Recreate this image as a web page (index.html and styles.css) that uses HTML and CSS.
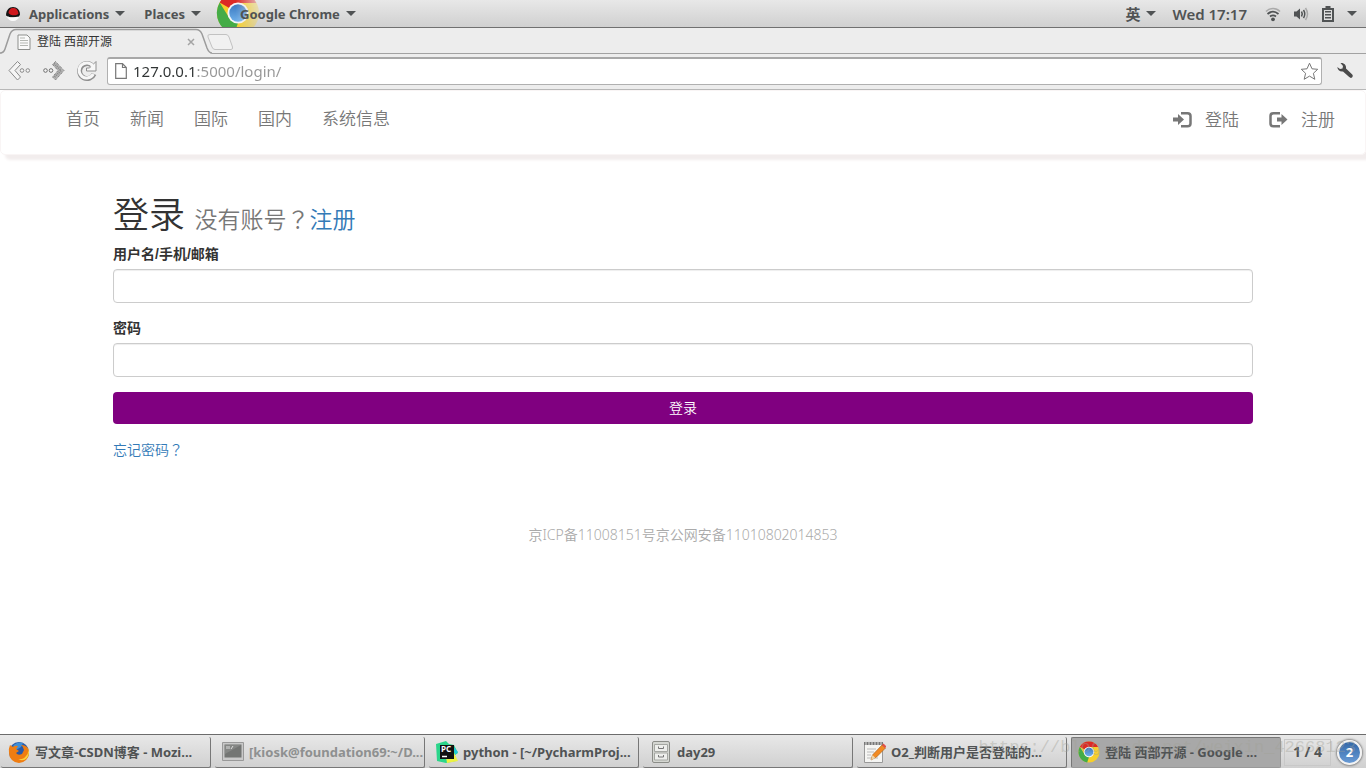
FILE: index.html
```html
<!DOCTYPE html>
<html lang="zh-CN">
<head>
<meta charset="utf-8">
<title>登陆 西部开源</title>
<link rel="stylesheet" href="styles.css">
</head>
<body>
<svg width="0" height="0" class="defs" aria-hidden="true">
  <defs>
    <linearGradient id="blue" x1="0" y1="0" x2="0" y2="1"><stop offset="0" stop-color="#3a78c0"/><stop offset="1" stop-color="#6fb0ea"/></linearGradient>
    <linearGradient id="fade" x1="0" x2="1" y1="0" y2="0"><stop offset=".45" stop-color="#fff"/><stop offset="1" stop-color="#333"/></linearGradient>
    <mask id="fadeMask"><rect width="48" height="48" fill="url(#fade)"/></mask>
    <symbol id="chrome" viewBox="0 0 48 48">
      <circle cx="24" cy="24" r="23" fill="#f6cf2b"/>
      <path d="M24 24 4 12.5A23 23 0 0 1 44 13H24z" fill="#dc2a25"/>
      <path d="M4 12.5 14.5 29.5 24 35 20 46.7A23 23 0 0 1 4 12.5z" fill="#44ac47"/>
      <circle cx="24" cy="24" r="11.5" fill="#f4f6f8"/>
      <circle cx="24" cy="24" r="9.5" fill="url(#blue)"/>
    </symbol>
  </defs>
</svg>

<header class="panel">
  <div class="panel-group">
    <button class="panel-btn apps" type="button">
      <svg width="16" height="16" viewBox="0 0 16 16" aria-hidden="true"><circle cx="8" cy="8" r="7" fill="#f2f2f2"/><path d="M1 9.500C1 4 4 1 8 1s7 3 7 7.500l-1 2C9 11.500 4 12 1 9.500z" fill="#151515"/><path d="M3.500 7c0-3 2-5 4.500-5 2.500-.3 5 1.500 5.500 5.500-1 2.500-8 2.500-10-.5z" fill="#d0181d"/><path d="M3 10.500c3 1.500 7 1.500 10 .5-1 3-3 4-5 4s-5-1.500-5-4.500z" fill="#fafafa"/></svg>
      <span>Applications</span><i class="caret"></i>
    </button>
    <button class="panel-btn" type="button"><span>Places</span><i class="caret"></i></button>
    <button class="panel-btn current" type="button">
      <svg class="current-icon" width="44" height="44" viewBox="0 0 48 48" aria-hidden="true"><use href="#chrome" width="48" height="48" mask="url(#fadeMask)"/></svg>
      <span>Google Chrome</span><i class="caret"></i>
    </button>
  </div>
  <div class="panel-group status">
    <button class="panel-btn lang" type="button"><span>英</span><i class="caret"></i></button>
    <button class="panel-btn clock" type="button"><span>Wed 17:17</span></button>
    <button class="panel-btn" type="button" aria-label="Network"><svg width="16" height="16" viewBox="0 0 16 16" fill="none"><path d="M1 5.500C5 1.500 11 1.500 15 5.500" stroke="#aaa" stroke-width="1.600"/><path d="M2.500 8C6 5 10 5 13.500 8M5 10.500c2-1.500 4-1.500 6 0" stroke="#505354" stroke-width="1.800"/><circle cx="8" cy="13.300" r="1.900" fill="#505354"/></svg></button>
    <button class="panel-btn" type="button" aria-label="Volume"><svg width="16" height="16" viewBox="0 0 16 16" fill="none"><path d="M1 5.500h2.500L7 2.500v11l-3.500-3H1z" fill="#505354"/><path d="M8.500 5.500q1.500 2.500 0 5M10.500 4q2.500 4 0 8" stroke="#505354" stroke-width="1.500"/><path d="M12.500 2q4 6 0 12" stroke="#aaa" stroke-width="1.500"/></svg></button>
    <button class="panel-btn power" type="button" aria-label="Battery"><svg width="14" height="16" viewBox="0 0 14 16"><path d="M4.500 0h5v2H13v14H1V2h3.500z" fill="#505354"/><path d="M3 4h8v10H3z" fill="#ddd"/><path d="M4 5h6v1.500H4zM4 8h6v1.500H4zM4 11h6v1.500H4z" fill="#505354"/></svg><i class="caret"></i></button>
  </div>
</header>

<div class="tabs">
  <div class="tab">
    <svg class="tab-shape" width="212" height="26" viewBox="0 0 212 26" aria-hidden="true"><path d="M0 25.500C3 25.500 4 24 5 21L10 6Q12 1.500 16 1.500H196Q200 1.500 202 6L207 20Q209 25.500 212 25.500V26H0z" fill="#ededed"/><path d="M0 25C3 25 4 24 5 21L10 6Q12 1.500 16 1.500H196Q200 1.500 202 6L207 20Q209 25 212 25" fill="none" stroke="#9c9c9c" stroke-width="1.500"/></svg>
    <svg width="14" height="16" viewBox="0 0 14 16" aria-hidden="true"><path d="M1 1h9l3 3v11.500H1z" fill="#fafafa" stroke="#8d8f8c"/><path d="M3 4h5M3 6.500h8M3 9h8M3 11.500h8" stroke="#b5b8b3"/></svg>
    <span class="tab-title">登陆 西部开源</span>
    <button class="tab-close" type="button" aria-label="Close"><svg width="8" height="8" viewBox="0 0 8 8"><path d="M1 1l6 6M7 1 1 7" stroke="#a4a4a4" stroke-width="1.500"/></svg></button>
  </div>
  <button class="new-tab" type="button" aria-label="New tab"><svg width="28" height="18" viewBox="0 0 28 18"><path d="M4 1.500H20Q22 1.500 23 4L26.500 14Q27 16.500 25 16.500H9Q7 16.500 6 14L2 4Q1 1.500 4 1.500z" fill="#f1f1f1" stroke="#c2c2c2"/></svg></button>
</div>

<div class="toolbar">
  <button class="tool" type="button" aria-label="Back"><svg width="24" height="22" viewBox="0 0 24 22" fill="#f5f5f5" stroke="#8a8a8a"><path d="M9.500 1.500 1 10.500l8.500 9.500 3-3L7 10.500l5.500-6z"/><circle cx="14" cy="10.500" r="1.800"/><circle cx="19.800" cy="10.500" r="1.800"/></svg></button>
  <button class="tool" type="button" aria-label="Forward"><svg width="24" height="22" viewBox="0 0 24 22" fill="#b4b4b4" stroke="#6d6d6d"><path d="M13.500 1.500l8.500 9-8.500 9.500-3-3 5.500-6.500-5.500-6z" stroke-dasharray="1 1"/><path d="M12 3.500l7 7-7 7" fill="none" stroke="#8a8a8a" stroke-width="2" stroke-dasharray="1 1"/><circle cx="3.500" cy="10.500" r="1.800" fill="#f5f5f5"/><circle cx="9" cy="10.500" r="1.800" fill="#f5f5f5"/></svg></button>
  <button class="tool" type="button" aria-label="Reload"><svg width="22" height="22" viewBox="0 0 22 22"><path d="M18 14A7.500 7.500 0 1 1 15.500 5" fill="none" stroke="#8f8f8f" stroke-width="5"/><path d="M20 1.500v9.500h-9.500V8h3z" fill="#f7f7f7" stroke="#8f8f8f"/><path d="M17.300 14A7.500 7.500 0 1 1 17 6.500" fill="none" stroke="#f7f7f7" stroke-width="3"/></svg></button>
  <div class="omnibox">
    <svg width="12" height="16" viewBox="0 0 12 16" aria-hidden="true"><path d="M.7.700H7.500L11.300 4.500V15.300H.7zM7.500.700V4.500H11.300" fill="#fff" stroke="#777" stroke-width="1.200"/></svg>
    <input class="url" type="text" aria-label="Address" value="127.0.0.1:5000/login/">
    <button class="star" type="button" aria-label="Bookmark"><svg width="19" height="19" viewBox="0 0 19 19"><path d="M9.500 1.200 12 6.800l5.700.5-4.300 4 1.400 6-5.300-3.200-5.300 3.200 1.400-6-4.300-4L7 6.800z" fill="#fff" stroke="#777" stroke-linejoin="round"/></svg></button>
  </div>
  <button class="wrench" type="button" aria-label="Menu"><svg width="18" height="18" viewBox="0 0 18 18"><path d="M4.500 1C8 .5 10.500 3 10 6.500L16 12.300c1 1 1 2.200.2 3s-2 .8-3-.2L7 9.500C4 10 1.500 8 1.300 5L4 7l2.500-.5L7 4z" fill="#4b4b4b"/></svg></button>
</div>

<main class="page">
  <nav class="navbar">
    <div class="nav-list">
      <a href="#">首页</a><a href="#">新闻</a><a href="#">国际</a><a href="#">国内</a><a href="#">系统信息</a>
    </div>
    <div class="nav-list account">
      <a href="#"><svg width="19" height="18" viewBox="0 0 19 18" aria-hidden="true"><path d="M0 6.500h5V3l6 5.500L5 14v-3.500H0z" fill="#777"/><path d="M8 2.200h6.500Q17.500 2.200 17.500 5v7.500q0 2.800-3 2.800H8" fill="none" stroke="#777" stroke-width="2.500"/></svg>登陆</a>
      <a href="#"><svg width="19" height="18" viewBox="0 0 19 18" aria-hidden="true"><path d="M11 2.200H4.500Q1.500 2.200 1.500 5v7.500q0 2.800 3 2.800H11" fill="none" stroke="#777" stroke-width="2.500"/><path d="M8 6.500h4.500V3L18.500 8.500l-6 5.500v-3.500H8z" fill="#777"/></svg>注册</a>
    </div>
  </nav>
  <form class="login">
    <h1>登录 <small>没有账号<span class="mark" lang="zh-TW">？</span><a href="#">注册</a></small></h1>
    <div class="field"><label for="user">用户名/手机/邮箱</label><input id="user" type="text"></div>
    <div class="field"><label for="pass">密码</label><input id="pass" type="password"></div>
    <button class="submit" type="button">登录</button>
    <a class="forgot" href="#">忘记密码<span class="mark" lang="zh-TW">？</span></a>
  </form>
  <footer class="footer">京ICP备11008151号京公网安备11010802014853</footer>
</main>

<div class="taskbar">
  <div class="tasks">
    <button class="task" type="button"><svg width="22" height="22" viewBox="0 0 22 22" aria-hidden="true"><circle cx="11" cy="11" r="10" fill="#2a5aa8"/><path d="M5 5Q9 0 15 2l-2 4-5 3z" fill="#3f8fd6"/><path d="M2 4l3 2q2-2 5-1L8 8l3 2-3 2q2 3 6 1l2-4q-1-4-3-5 8 0 8 8a10 10 0 0 1-20 0Q.5 7 2 4z" fill="#ef7d12"/><path d="M19 5q3 6-1 10-3 4-8 3 5 3 9-1 4-5 0-12z" fill="#fbd13c"/></svg><span>写文章-CSDN博客 - Mozi...</span></button>
    <button class="task minimized" type="button"><svg width="22" height="22" viewBox="0 0 22 22" aria-hidden="true"><path d="M.5 1.500h21v18H.5z" fill="#c9c9c9" stroke="#999"/><path d="M2.500 3.500h17v13h-17z" fill="#737573"/><path d="M3 4h16L3 13z" fill="#858785"/><path d="M5 5v3M7 5v3M9 8l2-3" stroke="#ddd"/></svg><span>[kiosk@foundation69:~/D...</span></button>
    <button class="task" type="button"><svg width="22" height="22" viewBox="0 0 22 22" aria-hidden="true"><path d="M0 3 10 0l3 3 5 1 4 8-3 2 1 6-10 2-9-2z" fill="#2bd58a"/><path d="M17 5l5 6-3 3z" fill="#20c8dc"/><path d="M18 12l4 8-11 2-1-6z" fill="#eef242"/><path d="M4 4h14v14H4z" fill="#111"/><path d="M6 15.500h5" stroke="#fff" stroke-width="1.500"/><text x="5" y="11" class="pc">PC</text></svg><span>python - [~/PycharmProj...</span></button>
    <button class="task" type="button"><svg width="22" height="22" viewBox="0 0 22 22" aria-hidden="true"><rect x="2.500" y=".5" width="17" height="21" rx="1.500" fill="#d5d7d2" stroke="#8b8d88"/><path d="M4.500 3.500h13v7h-13zM4.500 12h13v7h-13z" fill="#eeefec" stroke="#a5a7a2"/><path d="M8.500 5.500v2h5v-2M8.500 14v2h5v-2" fill="none" stroke="#777"/></svg><span>day29</span></button>
    <button class="task" type="button"><svg width="22" height="22" viewBox="0 0 22 22" aria-hidden="true"><path d="M.5 1.500h18v20H.5z" fill="#f5f5f3" stroke="#999"/><path d="M0 1h19v3H0z" fill="#777"/><path d="M2 0v4M5 0v4M8 0v4M11 0v4M14 0v4M17 0v4" stroke="#ddd"/><path d="M3 8h9M3 11h7M3 14h4M3 17h11" stroke="#bbb"/><path d="M7 19l1.500-5L18 4l3.500 3-9 9z" fill="#f28a22" stroke="#a45a12" stroke-width=".6"/><path d="M18 4l1.500-1.500 3 3L21 7z" fill="#e2504a"/><path d="M7 19l1.500-5 3 3z" fill="#efd3a4"/></svg><span>O2_判断用户是否登陆的...</span></button>
    <button class="task active" type="button"><svg width="22" height="22" aria-hidden="true"><use href="#chrome" width="22" height="22"/></svg><span>登陆 西部开源 - Google ...</span></button>
  </div>
  <button class="workspace" type="button">1 / 4</button>
  <button class="badge" type="button">2</button>
  <span class="watermark">https://blog.csdn.net/weixin_42668123</span>
</div>
</body>
</html>
```

FILE: styles.css
```css
* { box-sizing: border-box; }

body {
  margin: 0;
  min-height: 100vh;
  display: flex;
  flex-direction: column;
  background: #fff;
  color: #333;
  font: 14px/20px "Noto Sans", "Noto Sans CJK SC", sans-serif;
}

button { margin: 0; padding: 0; border: 0; background: none; color: inherit; font: inherit; }
svg { display: block; flex: none; }
a { color: #337ab7; text-decoration: none; }
.defs { position: absolute; }

/* Desktop panel */
.panel {
  height: 28px;
  display: flex;
  justify-content: space-between;
  border-bottom: 1px solid #707070;
  background: linear-gradient(#e8e8e8, #d0d0d0);
  color: #505354;
  font-size: 13px;
  font-weight: 700;
  overflow: hidden;
}
.panel-group { display: flex; align-items: center; gap: 19px; padding-left: 5px; }
.panel-btn { display: flex; align-items: center; gap: 6px; height: 27px; white-space: nowrap; }
.apps svg { margin-right: 2px; }
.caret { border: 5px solid transparent; border-top-color: #505354; border-bottom: 0; }
.current { position: relative; padding-left: 20px; }
.current span { position: relative; }
.current-icon { position: absolute; left: -4px; top: -9px; }
.status { gap: 12px; padding-right: 9px; }
.lang, .clock { font-size: 15px; font-weight: 600; }
.clock { margin: 0 6px 0 4px; }
.power { gap: 12px; }

/* Browser tab strip */
.tabs { display: flex; align-items: center; height: 26px; background: #ededed; border-bottom: 1px solid #a2a2a2; }
.tab { position: relative; display: flex; align-items: center; gap: 6px; width: 206px; height: 26px; padding: 3px 11px 0 17px; }
.tab-shape { position: absolute; left: 0; top: 0; }
.tab > :not(.tab-shape) { position: relative; }
.tab-title { flex: 1; font-size: 12px; }
.new-tab { padding-top: 2px; }

/* Browser toolbar */
.toolbar { display: flex; align-items: center; gap: 10px; height: 36px; padding: 0 12px 2px 8px; background: #ededed; border-bottom: 1px solid #b8b8b8; }
.omnibox { flex: 1; display: flex; align-items: center; height: 28px; padding: 0 2px 0 7px; margin-left: -1px; border: 1px solid #b0b0b0; border-top: 2px solid #a8a8a8; border-radius: 3px; background: #fff; }
.url {
  flex: 1;
  min-width: 0;
  height: 24px;
  padding: 0 0 0 6px;
  border: 0;
  outline: 0;
  color: transparent;
  background: linear-gradient(90deg, #303434 69px, #969696 69px);
  background-clip: text;
  -webkit-background-clip: text;
  font: 15px/24px "Noto Sans", sans-serif;
}
.wrench { margin-left: 4px; }

/* Site navigation */
.page { flex: 1; }
.navbar {
  display: flex;
  justify-content: space-between;
  height: 65px;
  padding: 0 30px 0 65px;
  border: 1px solid #f9f5f5;
  border-radius: 5px;
  box-shadow: 5px 5px 3px #f2eded;
}
.nav-list { display: flex; gap: 30px; padding-top: 18px; font-size: 17px; font-weight: 350; }
.navbar a { display: flex; align-items: center; color: #777; height: 20px; }
.navbar .account { padding-top: 19px; }
.account a { gap: 13px; }

/* Login form */
.login { display: flex; flex-direction: column; max-width: 1140px; margin: 0 auto; padding-top: 40px; }
h1 { margin: 0 0 5px; font-size: 36px; line-height: 40px; font-weight: 350; }
small { font-size: 23px; color: #777; }
.mark { font-family: "Noto Sans CJK TC", sans-serif; }
.field { display: flex; flex-direction: column; gap: 5px; margin-bottom: 15px; }
label { font-family: "Liberation Sans", "Noto Sans CJK SC", sans-serif; font-weight: 700; }
.field input { height: 34px; padding: 6px 12px; border: 1px solid #ccc; border-radius: 4px; box-shadow: inset 0 1px 1px #eee; font: inherit; }
.submit { height: 32px; border-radius: 4px; background: #800080; color: #fff; font-weight: 350; }
.forgot { align-self: flex-start; margin-top: 15px; font-weight: 350; }
.footer { margin-top: 65px; text-align: center; color: #aaa; font-weight: 350; }

/* Window list */
.taskbar {
  position: relative;
  display: flex;
  align-items: center;
  height: 34px;
  padding: 1px 4px 0 1px;
  border-top: 1px solid #6c6c6c;
  background: linear-gradient(#e8e8e8, #d0d0d0);
  color: #505354;
  font-size: 13px;
  font-weight: 700;
}
.tasks { flex: 1; display: flex; gap: 4px; min-width: 0; }
.task {
  flex: 1 1 0;
  min-width: 0;
  display: flex;
  align-items: center;
  gap: 5px;
  height: 31px;
  padding: 1px 0 0 7px;
  border: solid #777;
  border-width: 0 1px 1px 0;
  border-radius: 2px;
  overflow: hidden;
  white-space: nowrap;
}
.minimized { color: #8e9090; }
.active { border-width: 1px; border-color: #777 #999 #999 #777; background: #a8a8a8; padding: 0 0 0 6px; }
.pc { font: 700 8px "Noto Sans", sans-serif; fill: #fff; }
.workspace { width: 47px; height: 27px; margin: 0 6px 0 3px; border: 1px solid #c8c8c8; font-size: 14px; }
.badge { width: 25px; height: 25px; border: 2px solid #f3f3f3; border-radius: 50%; background: linear-gradient(#3267a8, #699bd5); box-shadow: 0 0 2px 1px #888; color: #fff; }
.watermark {
  position: absolute;
  right: 10px;
  top: 3px;
  color: rgba(160, 160, 150, .4);
  font: 17px/20px "Liberation Mono", monospace;
  pointer-events: none;
}
```
